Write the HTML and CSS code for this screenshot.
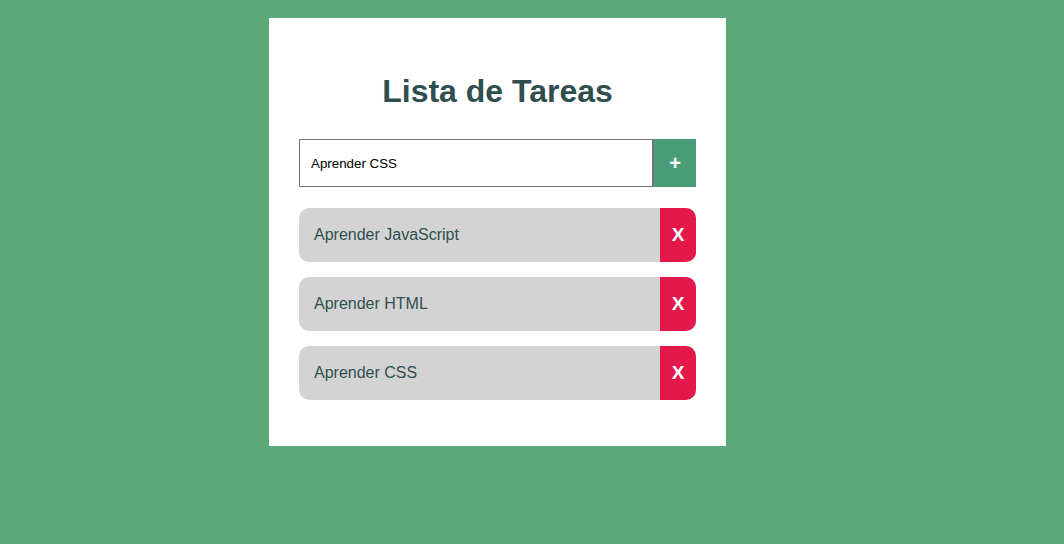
FILE: index.html
```html
<!DOCTYPE html>
<html lang="es">
<head>
<meta charset="utf-8">
<title>Lista de Tareas</title>
<link rel="stylesheet" href="styles.css">
</head>
<body>
<main class="card">
  <h1 class="title">Lista de Tareas</h1>
  <form class="add-form">
    <input class="add-input" type="text" value="Aprender CSS">
    <button class="add-btn" type="button">+</button>
  </form>
  <ul class="tasks">
    <li class="task"><span class="task-text">Aprender JavaScript</span><button class="del-btn" type="button">X</button></li>
    <li class="task"><span class="task-text">Aprender HTML</span><button class="del-btn" type="button">X</button></li>
    <li class="task"><span class="task-text">Aprender CSS</span><button class="del-btn" type="button">X</button></li>
  </ul>
</main>
</body>
</html>
```
FILE: styles.css
```css
html, body {
  margin: 0;
  padding: 0;
}
body {
  background: #5ca977;
  font-family: "Liberation Sans", Arial, sans-serif;
  min-height: 544px;
  display: flex;
  justify-content: flex-start;
  align-items: flex-start;
  padding: 18px 0 0 269px;
  box-sizing: border-box;
}
.card {
  width: 457px;
  box-sizing: border-box;
  background: #fff;
  padding: 30px 30px 46px;
}
.title {
  margin: 25px 0 0;
  text-align: center;
  font-size: 32px;
  font-weight: bold;
  color: #2f4f4f;
  line-height: 37px;
}
.add-form {
  display: flex;
  margin-top: 29px;
  height: 48px;
}
.add-input {
  flex: 1;
  min-width: 0;
  box-sizing: border-box;
  height: 48px;
  border: 1px solid #767676;
  border-right-width: 2px;
  padding: 0 11px;
  font-family: "Liberation Sans", Arial, sans-serif;
  font-size: 13.33px;
  color: #000;
  outline: none;
  margin: 0;
}
.add-btn {
  width: 42px;
  height: 48px;
  border: none;
  background: #4a9d79;
  color: #fff;
  font-family: "Liberation Sans", Arial, sans-serif;
  font-size: 20px;
  font-weight: bold;
  padding: 0;
  margin: 0;
}
.tasks {
  list-style: none;
  margin: 21px 0 0;
  padding: 0;
  display: flex;
  flex-direction: column;
  gap: 15px;
}
.task {
  display: flex;
  align-items: stretch;
  height: 54px;
  background: #d3d3d3;
  border-radius: 10px;
  overflow: hidden;
}
.task-text {
  flex: 1;
  display: flex;
  align-items: center;
  padding-left: 15px;
  font-size: 16px;
  color: #2f4f4f;
}
.del-btn {
  width: 36px;
  border: none;
  margin: 0;
  padding: 0;
  background: #e3184b;
  color: #fff;
  font-family: "Liberation Sans", Arial, sans-serif;
  font-size: 19px;
  font-weight: bold;
}
```
